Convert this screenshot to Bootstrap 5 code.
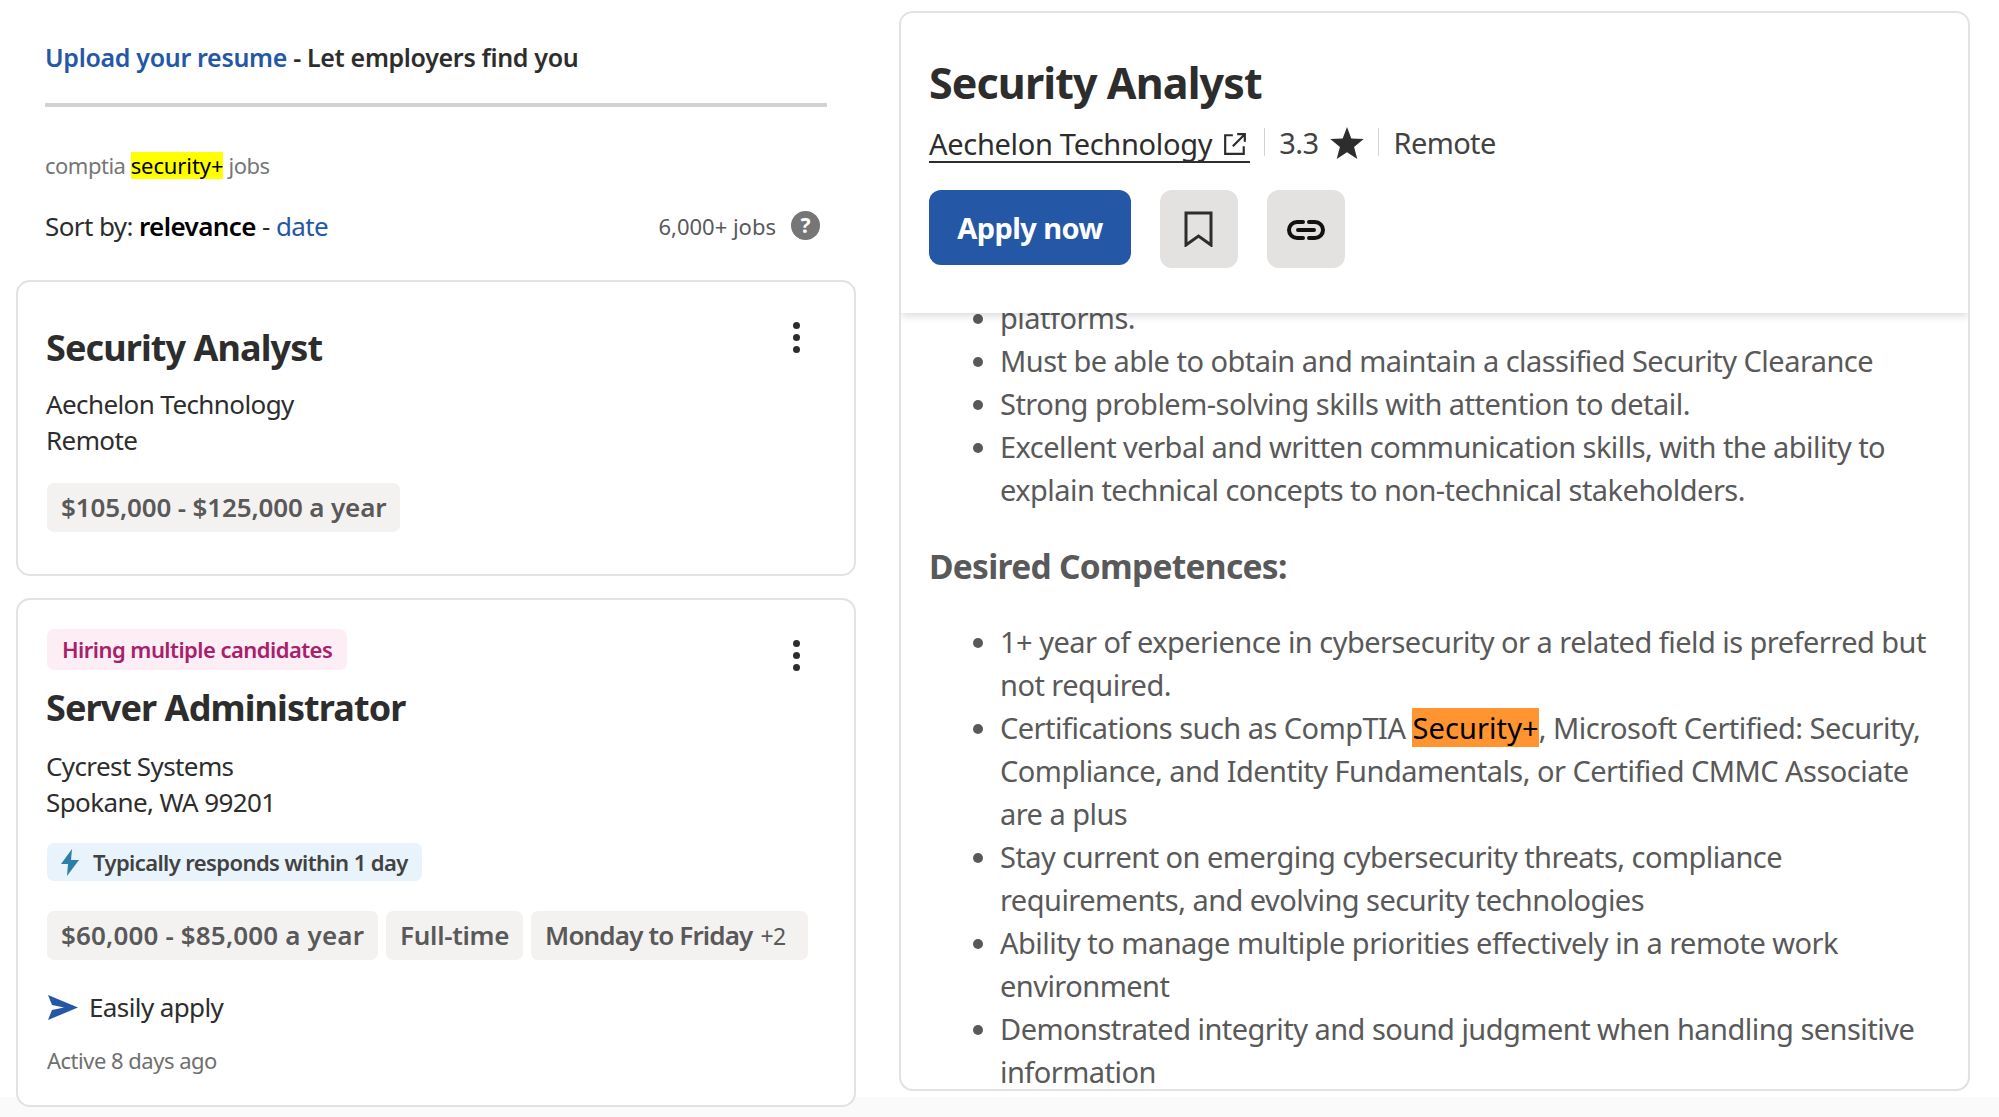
<!DOCTYPE html>
<html lang="en">
<head>
<meta charset="utf-8">
<title>Security Analyst jobs</title>
<link href="https://cdn.jsdelivr.net/npm/bootstrap@5.3.0/dist/css/bootstrap.min.css" rel="stylesheet">
<style>
html,body{height:1117px;overflow:hidden}
body{font-family:"Noto Sans",sans-serif;color:#2d2d2d;background:#fff;font-size:26px;letter-spacing:-.6px}
.page-wrap{height:1117px;background:linear-gradient(#fff 1097px,#fafafa 1097px)}
.left-pane{width:873px;padding:0 0 0 16px;flex:none}
.resume-line{padding:38px 0 0 29px;width:812px}
.resume-line .inner{font-size:25px;font-weight:600;line-height:38px;height:69px;border-bottom:4px solid #d4d2d0;width:782px;letter-spacing:-.33px}
.blue-link{color:#2557a7;text-decoration:none}
.query{font-size:22px;color:#767676;margin:43px 0 0 29px;line-height:30px;letter-spacing:-.5px}
.query mark{background:#ff0;color:#000;padding:0;letter-spacing:-.1px;display:inline-block;line-height:27px}
.sort-row{margin:26px 53px 0 29px;height:40px;font-size:26px;color:#2d2d2d}
.sort-row b{font-weight:600;color:#000}
.count{font-size:22px;color:#595959;margin-right:15px;letter-spacing:0}
.help{width:29px;height:29px;border-radius:50%;background:#767676;color:#fff;font-size:21px;font-weight:700;line-height:29px;text-align:center;letter-spacing:0;margin-top:-2px}
.job-box{border:2px solid #e4e2e0;border-radius:14px;background:#fff;padding:30px 28px 0;position:relative;width:840px}
.job-one{height:296px;margin-top:34px;padding-top:42px}
.job-two{height:509px;margin-top:22px;padding-top:29px}
.job-title{font-size:36px;font-weight:700;line-height:48px;margin:0;letter-spacing:-.9px;color:#2d2d2d}
.job-meta{font-size:26px;line-height:36px;margin-top:14px}
.job-two .job-title{margin-top:14px}
.job-two .job-meta{margin-top:16px}
.job-box>*:not(.dots){margin-left:1px}
.job-box>.job-title,.job-box>.job-meta{margin-left:0}
.chip{background:#f3f2f1;border-radius:7px;height:49px;padding:0 14px;font-size:26px;font-weight:600;line-height:49px;color:#595959;white-space:nowrap}
.sal-one{letter-spacing:-.15px}
.sal-two{letter-spacing:.15px}
.sched-type{letter-spacing:-.3px}
.sched-days{letter-spacing:-.85px;padding-right:22px}
.chip .more{font-weight:400;font-size:23px;margin-left:8px;letter-spacing:-.6px}
.chip-row{margin-top:25px}
.job-two .chip-row{margin-top:30px}
.hire-tag{display:inline-block;background:#fceef4;color:#a9206a;border-radius:7px;height:41px;line-height:40px;font-size:22px;font-weight:600;padding:0 15px;letter-spacing:-.55px}
.resp-tag{background:#e8f3fb;border-radius:7px;height:38px;font-size:22px;font-weight:600;color:#424242;padding:0 14px 0 12px;width:fit-content;letter-spacing:-.6px;margin-top:23px}
.dots{position:absolute;right:54px;top:40px;display:flex;flex-direction:column;gap:5px}
.dots span{width:7px;height:7px;border-radius:50%;background:#2d2d2d}
.easy{font-size:26px;color:#2d2d2d;margin-top:27px;height:40px;gap:11px}
.active-txt{font-size:22px;color:#6f6f6f;margin-top:17px;letter-spacing:-.5px}
.detail-pane{width:1071px;height:1080px;margin-top:11px;border:2px solid #e4e2e0;border-radius:14px;overflow:hidden;background:#fff;flex:none;margin-left:26px}
.detail-head{padding:41px 28px 0 28px;height:300px;flex:none;box-shadow:0 3px 8px rgba(0,0,0,.14);position:relative;z-index:2;background:#fff}
.detail-title{font-size:43px;font-weight:700;line-height:58px;margin:0;letter-spacing:-.9px}
.company-row{margin-top:8px;height:46px;font-size:29px;color:#424242;letter-spacing:-.6px}
.company-link{color:#2d2d2d;text-decoration:none;border-bottom:2px solid #2d2d2d;height:36px;line-height:32px;margin-top:4px;letter-spacing:-.3px;gap:11px;padding-right:3px}
.vbar{width:1px;height:28px;background:#d4d2d0;margin:-3px 14px 0}
.star-icon{margin-left:12px}
.apply{background:#2557a7;border:0;color:#fff;border-radius:12px;height:75px;width:202px;font-size:29px;font-weight:700;letter-spacing:-.6px}
.apply:hover{background:#2557a7;color:#fff}
.icon-btn{background:#e4e2e0;border:0;border-radius:12px;width:78px;height:78px;padding:0}
.btn-row{gap:29px;margin-top:24px}
.detail-body{padding:0 28px;font-size:29px;line-height:43px;color:#595959;margin-top:-17px;letter-spacing:-.53px;overflow:hidden;flex:1}
.detail-body ul{margin:0;padding-left:71px}
.detail-body ul li::marker{color:#595959}
.detail-body h3{font-size:33.5px;font-weight:700;line-height:44px;color:#595959;margin:33px 0 32px;letter-spacing:-.7px}
.detail-body mark{background:#ff9431;color:#000;padding:0;letter-spacing:.1px}
</style>
</head>
<body>
<div class="page-wrap d-flex align-items-start">
  <div class="left-pane">
    <div class="resume-line"><div class="inner"><a class="blue-link" href="#">Upload your resume</a> - Let employers find you</div></div>
    <div class="query">comptia <mark>security+</mark> jobs</div>
    <div class="sort-row d-flex justify-content-between align-items-center">
      <div>Sort by: <b>relevance</b> - <a class="blue-link" href="#">date</a></div>
      <div class="d-flex align-items-center"><span class="count">6,000+ jobs</span><span class="help">?</span></div>
    </div>
    <div class="job-box job-one">
      <div class="dots"><span></span><span></span><span></span></div>
      <h2 class="job-title">Security Analyst</h2>
      <div class="job-meta">Aechelon Technology<br>Remote</div>
      <div class="d-flex gap-2 chip-row"><span class="chip sal-one">$105,000 - $125,000 a year</span></div>
    </div>
    <div class="job-box job-two">
      <div class="dots"><span></span><span></span><span></span></div>
      <span class="hire-tag">Hiring multiple candidates</span>
      <h2 class="job-title">Server Administrator</h2>
      <div class="job-meta">Cycrest Systems<br>Spokane, WA 99201</div>
      <div class="resp-tag d-flex align-items-center gap-2">
        <svg width="22" height="27" viewBox="0 0 22 27"><path fill="#2b7fa8" d="M13 0 2 15h7l-1 12 12-16h-8z"/></svg>
        <span class="ms-1">Typically responds within 1 day</span>
      </div>
      <div class="d-flex gap-2 chip-row"><span class="chip sal-two">$60,000 - $85,000 a year</span><span class="chip sched-type">Full-time</span><span class="chip sched-days">Monday to Friday<span class="more">+2</span></span></div>
      <div class="easy d-flex align-items-center">
        <svg width="31" height="25" viewBox="0 0 31 25"><path fill="#2557a7" d="M1 0l30 12.500L1 25l4-10 12-2.500L5 10z"/></svg>
        <span>Easily apply</span>
      </div>
      <div class="active-txt">Active 8 days ago</div>
    </div>
  </div>
  <div class="detail-pane d-flex flex-column">
    <div class="detail-head">
      <h1 class="detail-title">Security Analyst</h1>
      <div class="company-row d-flex align-items-center">
        <a class="company-link d-flex align-items-center" href="#">Aechelon Technology
          <svg width="24" height="24" viewBox="0 0 22 22" fill="none" stroke="#2d2d2d" stroke-width="2"><path d="M9 3H2v17h17v-7M13 2h7v7M20 2 9 13"/></svg>
        </a>
        <span class="vbar"></span>
        <span>3.3</span>
        <svg class="star-icon" width="34" height="32" viewBox="0 0 24 23"><path fill="#2d2d2d" d="m12 0 3.100 8.200 8.900.5-6.900 5.600 2.300 8.700L12 18.100l-7.400 4.900 2.300-8.700L0 8.700l8.900-.5z"/></svg>
        <span class="vbar"></span>
        <span>Remote</span>
      </div>
      <div class="d-flex align-items-start btn-row">
        <button class="btn apply" type="button">Apply now</button>
        <button class="btn icon-btn" type="button" aria-label="Save"><svg width="30" height="36" viewBox="0 0 30 36" fill="none" stroke="#2d2d2d" stroke-width="3"><path d="M2 2h25v32L14.500 25 2 34z"/></svg></button>
        <button class="btn icon-btn" type="button" aria-label="Copy link"><svg width="38" height="22" viewBox="0 0 38 22" fill="none" stroke="#111" stroke-width="4" stroke-linecap="round"><path d="M16 3H10a8 8 0 0 0 0 16h6M22 3h6a8 8 0 0 1 0 16h-6M11 11h16"/></svg></button>
      </div>
    </div>
    <div class="detail-body">
      <ul>
        <li>platforms.</li>
        <li>Must be able to obtain and maintain a classified Security Clearance</li>
        <li>Strong problem-solving skills with attention to detail.</li>
        <li>Excellent verbal and written communication skills, with the ability to explain technical concepts to non-technical stakeholders.</li>
      </ul>
      <h3>Desired Competences:</h3>
      <ul>
        <li>1+ year of experience in cybersecurity or a related field is preferred but not required.</li>
        <li>Certifications such as CompTIA <mark>Security+</mark>, Microsoft Certified: Security, Compliance, and Identity Fundamentals, or Certified CMMC Associate are a plus</li>
        <li>Stay current on emerging cybersecurity threats, compliance requirements, and evolving security technologies</li>
        <li>Ability to manage multiple priorities effectively in a remote work environment</li>
        <li>Demonstrated integrity and sound judgment when handling sensitive information</li>
      </ul>
    </div>
  </div>
</div>
<script src="https://cdn.jsdelivr.net/npm/bootstrap@5.3.0/dist/js/bootstrap.bundle.min.js"></script>
</body>
</html>
